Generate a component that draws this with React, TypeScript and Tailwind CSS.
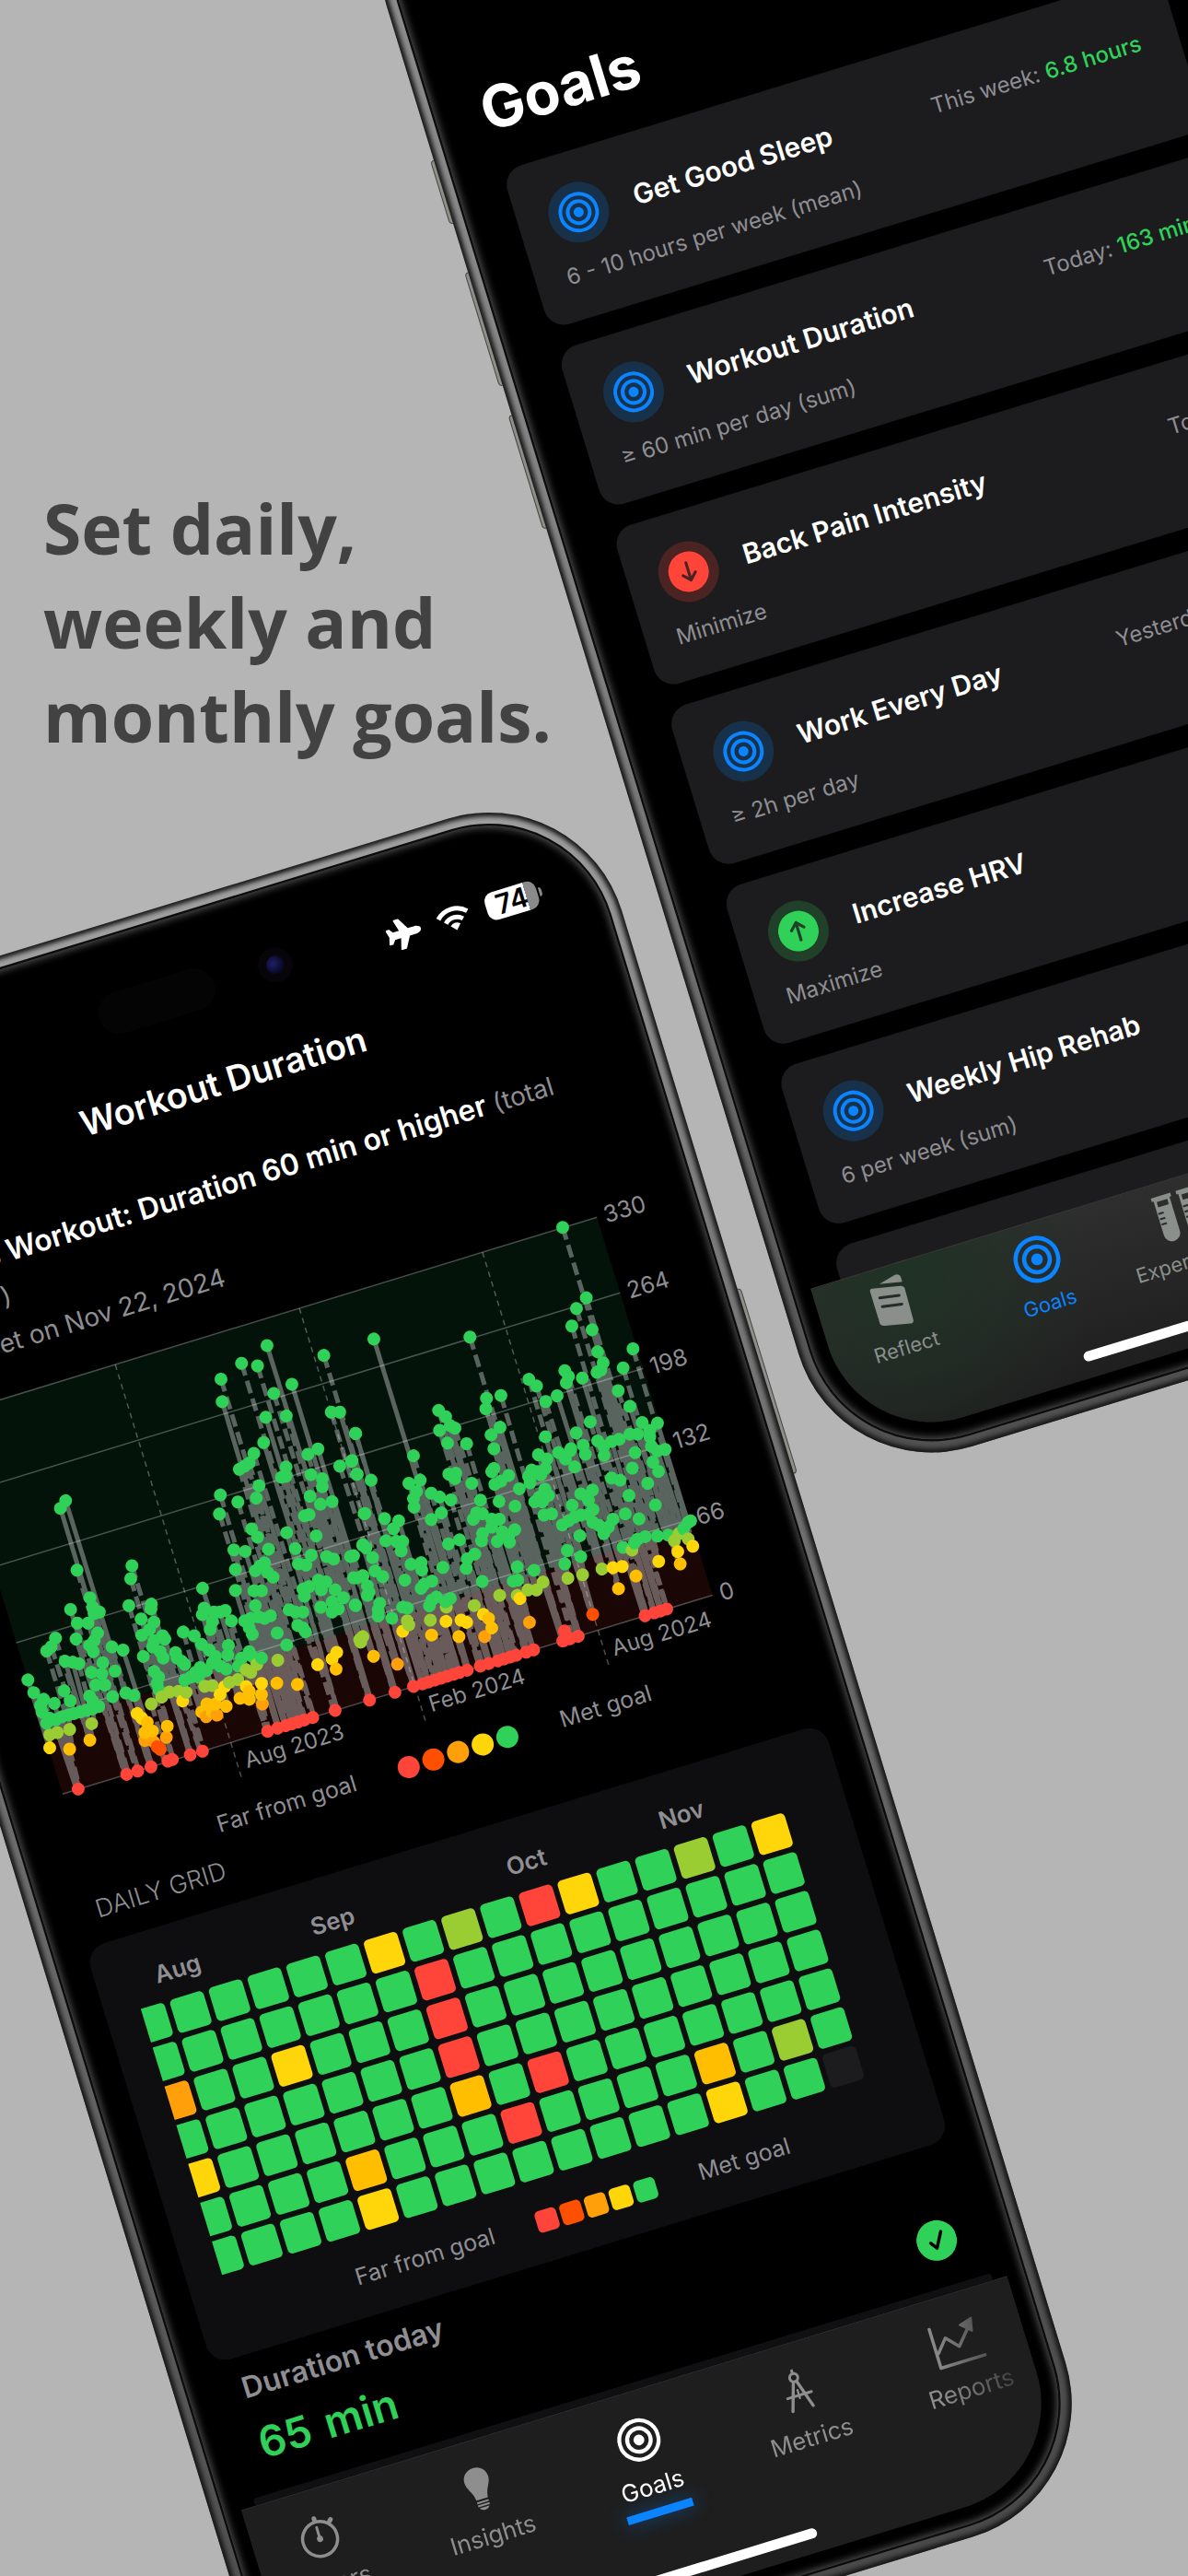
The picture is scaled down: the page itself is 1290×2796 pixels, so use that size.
import type { ReactNode } from 'react';
import { FaPlane } from 'react-icons/fa';
import clsx from 'clsx';

const ANGLE = (17 * Math.PI) / 180;
const PLOT = { width: 738, height: 429, left: -505, top: 1453 };

// Readings noted on the tilted canvas, in two sheets of "x,y" pairs.
const SHEETS = [
  {
    x: 0,
    y: 1440,
    points:
      '89,1114 108,1154 140,1175 130,1195 175,1188 135,1215 150,1250 160,1235 180,1240 200,1230 220,1225 240,1220 260,1215 280,1210 300,1205 320,1198 207,1148 227,1180 290,1165 300,1180 150,1023 165,1010 179,982 195,573 212,549 249,768 291,855 228,892 300,885 305,905 322,900 250,935 285,935 246,985 210,1055 235,1058 255,1063 316,966 305,990 290,1005 302,1025 296,1090 333,1060 330,1095 310,1130 340,1130 363,1010 399,1020 373,1086 365,1167 408,1155 435,1163 428,754 424,795 418,880 491,875 490,890 458,922 500,932 485,955 460,973 528,975 535,985 500,990 495,1010 465,1040 520,1025 530,1045 570,1028 575,1045 500,1087 515,1105 510,1125 515,1145 595,963 631,975 658,825 663,888 657,908 695,900 690,930 683,955 732,895 752,928 655,1002 680,1020 600,1065 590,1055 600,1115 620,1105 635,1090 650,1075 670,1085 690,1060 700,1040 715,1070 735,1080 742,1005 740,1035 715,900 645,1105 718,166 722,237 716,531 713,591 773,553 785,116 837,124 868,60 890,211 864,286 931,282 949,182 857,366 825,400 778,450 795,440 810,430 842,502 833,541 818,638 837,664 760,704 797,709 765,766 765,832 873,702 930,443 915,475 930,472 932,650 960,700 830,770 845,755 860,745 870,775 888,790 825,833 850,833 830,880 795,928 815,920 840,915 860,920 880,912 810,950 820,970 785,1045 810,1025 820,1040 850,1045 775,1070 835,1065 901,966 932,1004 1001,403 1034,386 1011,467 1048,480 1048,505 1008,535 1042,560 1080,552 990,597 1005,593 1028,660 1012,721 970,748 995,752 1062,725 1085,733 985,828 1005,820 1035,800 1060,805 1045,830 990,850 1090,830 1117,855 1080,868 1100,890 1080,900 1043,885 940,893 960,900 985,900 968,942 985,950 993,962 1053,91 1077,270 1105,270 1156,337 1105,440 1143,425 1160,466 1184,590 1180,690 1140,725 1150,792 1180,787 1157,880 160,1287 185,1280 225,1270 297,1252 491,1190 525,1168 550,1152 580,1150 605,1153 665,1134 690,1132 800,1082 815,1090 903,1052 160,1328 445,1220 460,1235 593,1180 730,1135 745,1122 773,1113 715,1160 800,1135 850,1125 1033,1066 1095,1027 1080,1048 1173,995 225,1332 291,1304 478,1248 543,1260 655,1215 672,1190 700,1190 690,1215 735,1197 670,1230 705,1225 780,1172 810,1150 810,1175 850,1160 900,1124 967,1128 1093,1080 470,1280 495,1275 470,1305 500,1310 540,1295 853,1190 510,1325 520,1333 253,1458 411,1412 447,1402 490,1388 545,1370 560,1365 618,1351 658,1339 870,1276 903,1267 930,1260 950,1254 970,1248 990,1242 1017,1233 1090,1210',
  },
  {
    x: 380,
    y: 1310,
    points:
      '76,417 5,800 22,843 17,715 67,862 47,967 111,983 157,990 140,1015 115,1053 150,1055 170,1055 165,1085 40,1065 50,1075 72,1106 10,1100 20,1170 40,1163 80,1148 105,1166 55,1195 60,1215 55,1225 15,1255 95,1250 90,1270 90,1290 135,1297 170,1262 185,1265 177,1177 197,1127 230,1122 232,1145 205,785 190,872 227,862 215,898 205,920 207,947 263,903 290,915 327,924 263,986 296,965 287,642 310,662 290,705 325,690 340,698 316,745 378,747 320,843 343,840 340,857 395,872 423,925 400,985 410,965 430,968 460,985 485,985 460,1010 430,1030 427,1053 319,1063 355,1050 301,1137 405,1095 380,1110 377,1140 429,1181 240,1190 265,1180 230,1203 280,1230 265,1240 325,1235 257,1258 310,1245 389,411 443,604 441,637 490,595 487,695 458,719 467,763 467,825 460,835 470,875 490,865 515,847 550,889 484,929 536,944 495,1025 535,1018 478,1055 515,1040 518,1057 543,1135 598,1146 530,1180 545,1177 581,544 606,565 636,614 673,596 635,725 612,782 640,795 678,775 715,770 700,795 730,820 590,830 610,835 635,825 585,870 580,850 600,840 620,845 633,890 645,910 600,930 615,915 625,930 630,972 655,968 698,517 710,535 703,555 755,540 721,376 736,321 691,65 768,287 787,388 805,457 823,492 815,515 803,522 781,678 735,713 758,752 765,780 718,763 805,738 825,755 850,740 875,733 826,784 872,580 888,508 920,448 910,629 910,717 935,717 927,775 918,824 950,680 1000,682 975,705 975,725 980,755 1000,770 1025,765 985,805 1003,834 968,872 993,940 907,910 850,855 878,862 750,905 788,893 775,925 722,941 690,1003 710,990 730,978 750,972 775,970 790,955 790,995 810,1005 825,1030 840,1010 855,985 895,968 940,984 747,1037 706,1084 698,1126 750,1103 888,1074 925,1060 935,1048 960,1040 1000,1038 1035,1035 1070,1030 1085,1015 1100,995 1108,990 30,1365 40,1355 185,1305 190,1318 260,1303 312,1262 403,1257 486,1225 578,1208 627,1183 708,1171 917,1082 1055,1053 1100,1047 170,1338 264,1350 311,1307 360,1303 378,1310 433,1285 543,1225 552,1235 606,1208 756,1160 819,1142 855,1138 885,1134 1004,1118 1066,1087 1115,1070 75,1417 353,1355 450,1298 460,1328 930,1164 873,1204 1074,1126 153,1442 437,1355 583,1310 789,1285 697,1337 62,1555 145,1531 205,1512 235,1505 255,1500 275,1493 295,1487 315,1480 335,1474 355,1468 380,1461 423,1448 450,1440 480,1432 500,1426 520,1420 540,1415 573,1406 597,1398 692,1370 715,1362 742,1355 960,1291 990,1280 1010,1275 1030,1268',
  },
];

// Turn the sheets back upright, so that x runs along the time axis.
const readings = SHEETS.flatMap(sheet =>
  sheet.points.split(' ').map(pair => {
    const [px, py] = pair.split(',').map(Number);
    const x = sheet.x + px / 3;
    const y = sheet.y + py / 2.904;
    return {
      x: x * Math.cos(ANGLE) - y * Math.sin(ANGLE) - PLOT.left,
      y: Math.min(x * Math.sin(ANGLE) + y * Math.cos(ANGLE) - PLOT.top, PLOT.height),
    };
  }),
).sort((a, b) => a.x - b.x);

// Each reading drops to the lowest one close to it in time.
const stems = readings.map((r, i) => {
  const near = readings.slice(Math.max(0, i - 2), i + 3).filter(n => Math.abs(n.x - r.x) < 9);
  const low = near.reduce((a, b) => (b.y > a.y ? b : a));
  return { ...r, x2: r.x + (low.x - r.x) / 2, y2: low.y };
});

const dotColor = (y: number) => {
  if (y < 353) return '#30d158';
  if (y < 368) return '#9acd32';
  if (y < 380) return '#ffd60a';
  if (y < 394) return '#ffbf00';
  if (y < 408) return '#ff9f0a';
  if (y < 419) return '#ff4f00';
  return '#ff453a';
};

const LEGEND = ['bg-[#ff453a]', 'bg-[#ff4f00]', 'bg-[#ff9f0a]', 'bg-[#ffd60a]', 'bg-[#30d158]'];

const CELL: Record<string, string> = {
  g: 'bg-[#30d158]',
  l: 'bg-[#9acd32]',
  y: 'bg-[#ffd60a]',
  a: 'bg-[#ffbf00]',
  o: 'bg-[#ff9f0a]',
  r: 'bg-[#ff453a]',
  n: 'bg-[#1c1c1e]',
};

const DAYS = [
  'ggggggyglgrygglgy',
  'gggggggrggggggggg',
  'oggygggrggggggggg',
  'gggggggrggggggggg',
  'yggggggagrggggggg',
  'ggggagggrggggaglg',
  'ggggyggggggggyggn',
];

const MONTHS: Record<number, string> = { 1: 'Aug', 5: 'Sep', 10: 'Oct', 14: 'Nov' };

type Goal = {
  title: string;
  detail: string;
  kind: 'target' | 'down' | 'up';
  period?: string;
  value?: string;
};

const GOALS: Goal[] = [
  { title: 'Get Good Sleep', detail: '6 - 10 hours per week (mean)', kind: 'target', period: 'This week:', value: '6.8 hours' },
  { title: 'Workout Duration', detail: '≥ 60 min per day (sum)', kind: 'target', period: 'Today:', value: '163 min' },
  { title: 'Back Pain Intensity', detail: 'Minimize', kind: 'down', period: 'Today:', value: '1' },
  { title: 'Work Every Day', detail: '≥ 2h per day', kind: 'target', period: 'Yesterday:', value: '3h 45m' },
  { title: 'Increase HRV', detail: 'Maximize', kind: 'up' },
  { title: 'Weekly Hip Rehab', detail: '6 per week (sum)', kind: 'target' },
  { title: 'Read More', detail: 'Maximize', kind: 'up' },
];

const TargetIcon = ({ className }: { className: string }) => (
  <svg viewBox="0 0 44 44" className={className} fill="none" stroke="currentColor" strokeWidth="4">
    <circle cx="22" cy="22" r="20" />
    <circle cx="22" cy="22" r="12" />
    <circle cx="22" cy="22" r="5.5" fill="currentColor" stroke="none" />
  </svg>
);

const ArrowIcon = ({ up }: { up: boolean }) => (
  <svg
    viewBox="0 0 44 44"
    className={clsx('size-11', up ? 'text-[#30d158]' : 'rotate-180 text-[#ff453a]')}
  >
    <circle cx="22" cy="22" r="22" fill="currentColor" />
    <path
      d="M22 32V12.500M15 19.500l7-7 7 7"
      fill="none"
      stroke={up ? '#20402a' : '#4a2322'}
      strokeWidth="3.2"
      strokeLinecap="round"
      strokeLinejoin="round"
    />
  </svg>
);

const TimerIcon = () => (
  <svg viewBox="0 0 50 50" className="size-[50px]" fill="none" stroke="currentColor" strokeLinecap="round">
    <circle cx="25" cy="27" r="19" strokeWidth="3.5" />
    <path d="M25 27V14" strokeWidth="3" />
    <circle cx="25" cy="27" r="3.4" fill="currentColor" stroke="none" />
    <path d="M25 6V4M40 12l2-2" strokeWidth="5" />
  </svg>
);

const BulbIcon = () => (
  <svg viewBox="0 0 50 50" className="size-[50px]" fill="currentColor">
    <path d="M25 2c8 0 13.500 6 13.500 13 0 8-6 11-7 22H18.500c-1-11-7-14-7-22C11.500 8 17 2 25 2z" />
    <path d="M18.500 39h13v2h-13zM18.500 42.500h13v2h-13zM19.500 46h11c-1 2-3 3-5.500 3s-4.500-1-5.500-3z" />
  </svg>
);

const CompassIcon = () => (
  <svg viewBox="0 0 50 50" className="size-[50px]" fill="none" stroke="currentColor" strokeLinecap="round">
    <circle cx="25" cy="10" r="4.500" strokeWidth="3" />
    <path d="M25 5V2" strokeWidth="3" />
    <path d="M23 15L13.500 45M27 15l9.500 30" strokeWidth="3.4" />
    <path d="M12 30h27" strokeWidth="3" />
    <path d="M25 24v9" strokeWidth="2.400" />
  </svg>
);

const ReportsIcon = () => (
  <svg viewBox="0 0 56 50" className="h-[50px] w-[56px]" fill="none" stroke="currentColor" strokeWidth="3.500" strokeLinecap="round" strokeLinejoin="round">
    <path d="M3 3v44h50" />
    <path d="M5 31l12-14 12 13 15-17" />
    <path d="M50 4l-14 4 11 10z" fill="currentColor" strokeWidth="2" />
  </svg>
);

const ReflectIcon = () => (
  <svg viewBox="0 0 50 60" className="h-[60px] w-[50px]">
    <path d="M8 8.500l30 6c3 .8 4 2 4 4l-1 35c0 3-2 4-4 3.500L9 51c-3-.8-4-2-4-4V11c0-2 1.500-3 3-2.500z" fill="currentColor" />
    <path d="M17 6l19-4.500c3-.5 5 1 5.500 4V11z" fill="currentColor" />
    <path d="M13 20.500l21 3.500M13 30.500l21 3.500" stroke="#242c26" strokeWidth="3" strokeLinecap="round" />
  </svg>
);

const Tube = ({ x }: { x: number }) => (
  <g transform={`translate(${x} 0)`}>
    <path d="M1 1.500h22v4H1z" fill="currentColor" />
    <path d="M3 5h18v39a9 9 0 0 1-18 0z" fill="currentColor" />
    <path d="M6 7h12v6H6z" fill="#2d2d2d" />
    <path d="M4 20h6M4 26h6M4 32h6" stroke="#2d2d2d" strokeWidth="2.200" />
  </g>
);

const TubesIcon = () => (
  <svg viewBox="0 0 52 56" className="h-[56px] w-[52px]">
    <Tube x={0} />
    <Tube x={28} />
  </svg>
);

const WifiIcon = () => (
  <svg viewBox="0 0 38 27" className="h-[27px] w-[38px]" fill="none" stroke="currentColor" strokeWidth="5">
    <path d="M2.600 9.800a23 23 0 0 1 32.800 0" />
    <path d="M9.300 16.400a13.700 13.700 0 0 1 19.400 0" />
    <path d="M13.500 20.700a7.600 7.600 0 0 1 11 0L19 26.500z" fill="currentColor" stroke="none" />
  </svg>
);

type PhoneProps = {
  className: string;
  metal: string;
  screen: string;
  buttons: ReactNode;
  children: ReactNode;
};

// Metal rim, black bezel, then the screen itself.
const Phone = ({ className, metal, screen, buttons, children }: PhoneProps) => (
  <div className={clsx('absolute origin-top-left -rotate-17', className)}>
    {buttons}
    <div className={clsx('relative rounded-[151px] p-3 shadow-[inset_0_0_5px_4px_#161616]', metal)}>
      <div className="rounded-[139px] border-2 border-[#0c0c0c] bg-black p-[19px] shadow-[inset_0_0_8px_2px_#555]">
        <div className={clsx('relative flex flex-col overflow-hidden rounded-[118px] bg-black', screen)}>
          {children}
        </div>
      </div>
    </div>
  </div>
);

const SideButton = ({ className }: { className: string }) => (
  <div className={clsx('absolute w-2 rounded-sm border border-[#444] bg-[#8f8f8a]', className)} />
);

const Legend = ({ round }: { round?: boolean }) => (
  <div className="flex h-8 items-center justify-center gap-[48px] pl-2 text-[25px] text-[#8e8e93]">
    <span>Far from goal</span>
    <div className="flex gap-1">
      {LEGEND.map(color => (
        <span key={color} className={clsx('size-6', color, round ? 'rounded-full' : 'rounded-[5px]')} />
      ))}
    </div>
    <span>Met goal</span>
  </div>
);

const StatusBar = () => (
  <header className="grid grid-cols-[1fr_219px_1fr] items-center pt-[37px]">
    <div className="col-start-2 flex items-center justify-between">
      <div className="h-[46px] w-[131px] rounded-full bg-[#040404]" />
      <div className="flex size-[38px] items-center justify-center rounded-full bg-[#07050a]">
        <div className="size-5 rounded-full bg-radial-[at_40%_40%] from-[#1f1f66] to-[#070720] to-70%" />
      </div>
    </div>
    <div className="flex items-center justify-end gap-[18px] pt-4 pr-[44px] text-white">
      <FaPlane className="size-[38px]" />
      <WifiIcon />
      <div className="flex items-center gap-0.5">
        <span className="flex h-[31px] w-[58px] items-center justify-center rounded-[10px] bg-linear-to-r from-white from-78% to-[#8a8a8a] to-78% text-[30px] leading-8 font-semibold text-black">
          74
        </span>
        <span className="h-[10px] w-[3px] rounded-r-full bg-[#8a8a8a]" />
      </div>
    </div>
  </header>
);

const DurationChart = () => (
  <div className="mt-[39px] flex pl-[42px]">
    <div className="relative h-[469px] w-[738px] text-[24px] leading-8 text-[#8e8e93]">
      <svg viewBox="0 0 738 469" className="h-[469px] w-[738px] overflow-visible">
        <rect width={PLOT.width} height="351" fill="#04130a" />
        <rect y="351" width={PLOT.width} height="78" fill="#190605" />
        <g stroke="white" strokeWidth="1.500">
          {[0, 1, 2, 3, 4, 5].map(n => (
            <path key={n} d={`M0 ${n * 85.8}H738`} strokeOpacity="0.28" />
          ))}
          {[191, 400, 608].map(x => (
            <path key={x} d={`M${x} 0V469`} strokeDasharray="6 5" strokeOpacity="0.3" />
          ))}
        </g>
        <g stroke="white" strokeWidth="5" opacity="0.34">
          {stems.map((s, i) => (
            <path
              key={i}
              d={`M${s.x} ${s.y}L${s.x2} ${s.y2}`}
              strokeDasharray={i % 3 ? '14 6' : undefined}
            />
          ))}
        </g>
        {readings.map((r, i) => (
          <circle key={i} cx={r.x} cy={r.y} r="7" fill={dotColor(r.y)} />
        ))}
      </svg>
      <span className="absolute bottom-0 left-[200px]">Aug 2023</span>
      <span className="absolute bottom-0 left-[409px]">Feb 2024</span>
      <span className="absolute bottom-0 left-[617px]">Aug 2024</span>
    </div>
    <div className="-mt-4 flex h-[461px] flex-col justify-between pl-2 text-[25px] leading-8 text-[#8e8e93]">
      {[330, 264, 198, 132, 66, 0].map(n => (
        <span key={n}>{n}</span>
      ))}
    </div>
  </div>
);

const DailyGrid = () => (
  <section className="mx-4 mt-[21px] rounded-[22px] bg-[#0e0e10] pt-[34px] pb-7 pl-[39px]">
    <div className="grid grid-cols-[26px_repeat(16,38px)] gap-1.5">
      {DAYS[0].split('').map((_, i) => (
        <span key={i} className="-mx-4 mb-2 h-8 text-center text-[26px] leading-8 font-semibold text-[#8e8e93]">
          {MONTHS[i]}
        </span>
      ))}
      {DAYS.flatMap((row, r) =>
        row.split('').map((day, c) => (
          <span key={`${r}-${c}`} className={clsx('h-[38px]', CELL[day], c === 0 ? 'rounded-r-[5px]' : 'rounded-[5px]')} />
        )),
      )}
    </div>
    <div className="mt-[30px] -ml-[39px]">
      <Legend />
    </div>
  </section>
);

const DETAIL_TABS = [
  { label: 'Timers', icon: <TimerIcon /> },
  { label: 'Insights', icon: <BulbIcon /> },
  { label: 'Goals', icon: <TargetIcon className="size-[47px]" />, active: true },
  { label: 'Metrics', icon: <CompassIcon /> },
  { label: 'Reports', icon: <ReportsIcon /> },
];

const DetailPhone = () => (
  <Phone
    className="top-[1118px] left-[-264px] w-[936px]"
    metal="bg-linear-to-b from-[#a0a0a0] via-[#808080] via-20% to-[#4a4a4a]"
    screen="h-[1884px]"
    buttons={<SideButton className="top-[580px] -right-1 h-[210px]" />}
  >
    <StatusBar />
    <h2 className="mt-[55px] text-center text-[38px] leading-[44px] font-semibold text-white">Workout Duration</h2>
    <p className="mt-[64px] px-9 text-[32px] leading-[44px] font-semibold text-white">
      Fitness Workout: Duration 60 min or higher{' '}
      <span className="text-[28px] font-normal text-[#8e8e93]">(total per&nbsp;day)</span>
    </p>
    <p className="mt-[9px] px-9 text-[28px] leading-9 text-[#8e8e93]">Goal set on Nov 22, 2024</p>
    <DurationChart />
    <div className="mt-[26px]">
      <Legend round />
    </div>
    <h3 className="mt-[17px] px-10 text-[27px] leading-8 font-light text-[#8e8e93]">DAILY GRID</h3>
    <DailyGrid />
    <div className="mt-[15px] flex items-end justify-between px-10">
      <div>
        <h3 className="text-[32px] leading-10 font-semibold text-[#8e8e93]">Duration today</h3>
        <p className="mt-4 flex gap-4 text-[46px] leading-[52px] font-semibold text-[#30d158]">
          <span>65</span>
          <span>min</span>
        </p>
      </div>
      <svg viewBox="0 0 44 44" className="size-11">
        <circle cx="22" cy="22" r="22" fill="#30d158" />
        <path d="M15 23l5 7 9-16" fill="none" stroke="black" strokeWidth="3.500" strokeLinecap="round" strokeLinejoin="round" />
      </svg>
    </div>
    <div className="mx-4 mt-auto h-2 rounded-t-sm bg-[#101012]" />
    <nav className="flex h-[227px] flex-col items-center bg-[#1e1e1e] shadow-[inset_0_1px_0_#2a2a2c]">
      <div className="mask-[linear-gradient(to_right,black_88%,transparent_101%)] flex w-full justify-center">
        {DETAIL_TABS.map(tab => (
          <button
            key={tab.label}
            type="button"
            className={clsx(
              'flex w-[181px] shrink-0 flex-col items-center pt-7 pb-5 text-[26px] leading-8',
              tab.active ? 'text-white' : 'text-[#8e8e8e]',
            )}
          >
            <span className="flex h-[50px] items-center">{tab.icon}</span>
            <span className="mt-3">{tab.label}</span>
            {tab.active && <span className="mt-2 h-[9px] w-[74px] bg-[#0a84ff] shadow-[0_0_20px_2px_#0a84ff55]" />}
          </button>
        ))}
      </div>
      <div className="mt-auto mb-4 h-[11px] w-[312px] rounded-full bg-white" />
    </nav>
  </Phone>
);

const BADGE = { target: 'bg-[#17314b]', down: 'bg-[#4a2322]', up: 'bg-[#20402a]' };

const GoalCard = ({ title, detail, kind, period, value }: Goal) => (
  <li className="rounded-[22px] bg-[#1c1c1e] pt-[34px] pr-[42px] pb-8 pl-[34px]">
    <div className="flex items-center">
      <span className={clsx('mr-[29px] flex size-[66px] items-center justify-center rounded-full', BADGE[kind])}>
        {kind === 'target' ? <TargetIcon className="size-11 text-[#0a84ff]" /> : <ArrowIcon up={kind === 'up'} />}
      </span>
      <div className="flex flex-1 items-baseline justify-between">
        <h3 className="text-[30px] font-semibold text-white">{title}</h3>
        {period && (
          <p className="text-[24px] text-[#8e8e93]">
            {period} <span className="font-medium text-[#30d158]">{value}</span>
          </p>
        )}
      </div>
    </div>
    <p className="mt-4 text-[24px] leading-8 text-[#8e8e93]">{detail}</p>
  </li>
);

const LIST_TABS = [
  { label: 'Reflect', icon: <ReflectIcon /> },
  { label: 'Goals', icon: <TargetIcon className="size-[51px]" />, active: true },
  { label: 'Experiments', icon: <TubesIcon /> },
  { label: 'Metrics', icon: <CompassIcon /> },
  { label: 'More', icon: <ReportsIcon /> },
];

const ListPhone = () => (
  <Phone
    className="top-[-137px] left-[376px] w-[880px]"
    metal="bg-linear-to-b from-[#8e8e8e] via-[#808080] to-[#505050]"
    screen="h-[1765px]"
    buttons={
      <>
        <SideButton className="top-[325px] -left-1 h-[72px]" />
        <SideButton className="top-[452px] -left-1 h-[129px]" />
        <SideButton className="top-[614px] -left-1 h-[129px]" />
      </>
    }
  >
    <h2 className="mt-[219px] px-8 text-[64px] leading-[76px] font-bold text-white">Goals</h2>
    <ul className="mt-[30px] flex flex-col gap-6 px-[34px]">
      {GOALS.map(goal => (
        <GoalCard key={goal.title} {...goal} />
      ))}
    </ul>
    <nav className="absolute inset-x-0 bottom-0 flex h-[182px] flex-col items-center border-t border-[#3a3a3a] bg-[radial-gradient(circle_at_100px_10px,#1f3224,transparent_210px),linear-gradient(to_top,#1f1f1f,#2e2e2e)]">
      <div className="flex w-full">
        {LIST_TABS.map(tab => (
          <button
            key={tab.label}
            type="button"
            className={clsx(
              'flex flex-1 flex-col items-center pt-[10px] text-[22px] leading-8',
              tab.active ? 'text-[#0a84ff]' : 'text-[#8a8f8b]',
            )}
          >
            <span className="flex h-[60px] items-center">{tab.icon}</span>
            <span className="mt-1">{tab.label}</span>
          </button>
        ))}
      </div>
      <div className="mt-auto mb-[18px] h-[11px] w-[290px] rounded-full bg-white" />
    </nav>
  </Phone>
);

export default function App() {
  return (
    <main className="relative min-h-screen overflow-hidden bg-[#b5b5b5] font-[Inter,sans-serif]">
      <h1 className="w-[600px] pt-[522px] pl-[47px] font-['Open_Sans',sans-serif] text-[75px] leading-[102px] font-bold text-[#424242]">
        Set daily, weekly and monthly goals.
      </h1>
      <ListPhone />
      <DetailPhone />
    </main>
  );
}
